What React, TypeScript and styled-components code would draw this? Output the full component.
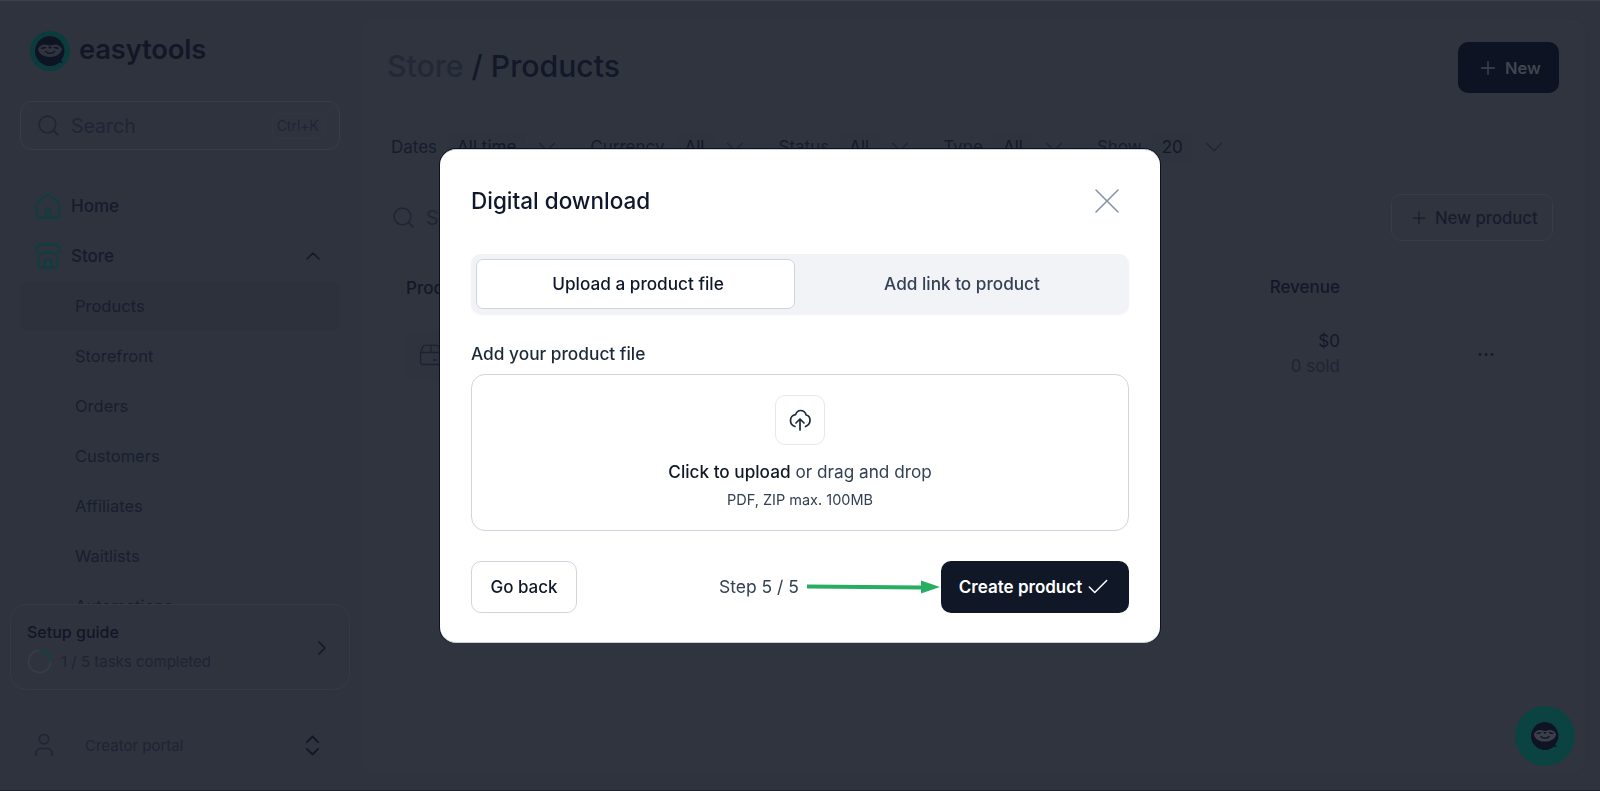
import React from 'react';
import styled, { createGlobalStyle } from 'styled-components';
import { Check, ChevronDown, ChevronRight, ChevronUp, ChevronsUpDown, Plus, Search, User, X } from 'lucide-react';

const GlobalStyle = createGlobalStyle`
  html, body { margin: 0; padding: 0; height: 100%; background: #2f333e; }
  * { box-sizing: border-box; }
  body { font-family: Inter, "Liberation Sans", sans-serif; overflow: hidden; }
`;

const Shell = styled.div`
  display: flex;
  height: 791px;
  overflow: hidden;
  background: #2f333e;
  border-top: 1px solid #423d52;
  border-bottom: 1px solid #1d2029;
  color: #171c2d;
`;

const Sidebar = styled.aside`
  width: 361px;
  flex-shrink: 0;
  display: flex;
  flex-direction: column;
`;

const LogoRow = styled.div`
  display: flex;
  align-items: center;
  gap: 9px;
  height: 40px;
  margin: 30px 0 30px 30px;
`;

const Wordmark = styled.span`
  font-size: 27.4px;
  font-weight: 600;
  color: #121727;
  letter-spacing: -0.2px;
  position: relative;
  top: -2px;
`;

const SearchBox = styled.div`
  display: flex;
  align-items: center;
  height: 49px;
  margin: 0 21px 0 20px;
  padding: 0 15px 0 15px;
  border: 1px solid #393d48;
  border-radius: 12px;
  color: #1f2534;
  font-size: 19.5px;
  gap: 10px;
`;

const SearchLabel = styled.span`
  flex: 1;
`;

const Kbd = styled.span`
  border: 1px solid #323641;
  border-radius: 5px;
  padding: 4px 4px;
  font-size: 14px;
  line-height: 16px;
  color: #1f2534;
`;

const Nav = styled.nav`
  flex: 1;
  min-height: 0;
  overflow: hidden;
  padding: 31px 21px 0 20px;
`;

const NavRow = styled.div`
  display: flex;
  align-items: center;
  height: 50px;
  padding: 0 15px;
  gap: 10px;
  font-size: 17px;
  font-weight: 500;
  color: #161b2c;
`;

const RowChevron = styled.span`
  margin-left: auto;
  display: flex;
  color: #131827;
`;

const SubRow = styled.div<{ $active?: boolean }>`
  display: flex;
  align-items: center;
  height: 50px;
  padding-left: 55px;
  padding-bottom: 1px;
  font-size: 16.5px;
  color: #181e2f;
  border-radius: 10px;
  background: ${p => (p.$active ? '#2d313b' : 'transparent')};
`;

const SetupCard = styled.div`
  display: flex;
  align-items: center;
  justify-content: space-between;
  height: 86px;
  margin: 0 11px 0 10px;
  padding: 2px 15px 0 16px;
  background: #2f333e;
  border: 1px solid #363a46;
  border-radius: 16px;
`;

const SetupTitle = styled.div`
  font-size: 16px;
  font-weight: 500;
  color: #111627;
  margin-bottom: 7px;
`;

const SetupProgress = styled.div`
  display: flex;
  align-items: center;
  gap: 9px;
  font-size: 15px;
  color: #1e2433;
`;

const SidebarFooter = styled.div`
  display: flex;
  align-items: center;
  height: 100px;
  padding: 10px 35px 0 30px;
  font-size: 15px;
  color: #1e2433;
`;

const FooterLabel = styled.span`
  margin-left: 27px;
  flex: 1;
`;

const Main = styled.main`
  flex: 1;
  margin: 17px 13px 15px 0;
  border: 1px solid #2e323c;
  border-radius: 16px;
  background: #30343f;
  display: flex;
  flex-direction: column;
`;

const TitleRow = styled.div`
  display: flex;
  align-items: center;
  justify-content: space-between;
  padding: 23px 27px 0 25px;
`;

const PageTitle = styled.h1`
  margin: -4px 0 0;
  font-size: 30.2px;
  font-weight: 500;
  color: #131828;
`;

const Crumb = styled.span`
  color: #232836;
`;

const NewButton = styled.div`
  display: flex;
  align-items: center;
  gap: 6px;
  height: 51px;
  width: 101px;
  padding-left: 19px;
  border-radius: 10px;
  background: #0d1322;
  color: #41454f;
  font-size: 16.5px;
  font-weight: 600;
`;

const FilterBar = styled.div`
  display: flex;
  align-items: center;
  height: 60px;
  margin-top: 24px;
  padding-left: 29px;
  border-bottom: 1px solid #2f333d;
  font-size: 17px;
  color: #171c2d;
`;

const FilterGroup = styled.div`
  display: flex;
  align-items: center;
  margin-right: 35px;
`;

const FilterValue = styled.span`
  margin: 0 13px 0 10px;
  padding: 5px 10px;
  border-radius: 8px;
  background: #2f333d;
  color: #131828;
`;

const FilterChevron = styled.span`
  display: flex;
  margin: 0 -7px;
  color: #1e2433;
`;

const TableTools = styled.div`
  display: flex;
  align-items: center;
  justify-content: space-between;
  padding: 17px 33px 0 29px;
`;

const TableSearch = styled.div`
  display: flex;
  align-items: center;
  gap: 10px;
  font-size: 19.5px;
  color: #1f2534;
`;

const NewProductButton = styled.div`
  display: flex;
  align-items: center;
  gap: 6px;
  height: 47px;
  width: 162px;
  padding-left: 17px;
  border: 1px solid #383c47;
  border-radius: 10px;
  color: #171c2d;
  font-size: 16.7px;
  font-weight: 500;
`;

const TableGrid = styled.div`
  display: grid;
  grid-template-columns: 1fr 90px 212px;
  padding: 0 34px 0 44px;
  align-items: center;
  font-size: 17px;
`;

const TableHead = styled(TableGrid)`
  height: 70px;
  font-weight: 500;
  color: #131828;
  padding-top: 23px;
`;

const TableRow = styled(TableGrid)`
  margin-top: 19px;
`;

const RevenueCell = styled.div`
  text-align: right;
  line-height: 25px;
  white-space: nowrap;
  color: #131828;
`;

const RowRevenue = styled(RevenueCell)`
  margin-top: -3px;
`;

const MutedLine = styled.div`
  color: #1e2433;
`;

const Thumb = styled.div`
  width: 50px;
  height: 50px;
  border-radius: 10px;
  background: #2f333d;
  display: flex;
  align-items: center;
  justify-content: center;
`;

const RowActions = styled.div`
  padding-left: 137px;
  font-size: 18px;
  font-weight: 700;
  line-height: 14px;
  color: #161b2b;
`;

const ChatBubble = styled.div`
  position: fixed;
  left: 1515px;
  top: 706px;
  width: 60px;
  height: 60px;
`;

const Overlay = styled.div`
  position: fixed;
  inset: 0;
  display: flex;
  align-items: center;
  justify-content: center;
`;

const Modal = styled.div`
  width: 720px;
  height: 494px;
  padding: 31px 31px 0 31px;
  background: #fff;
  border-top: 1px solid #c9d0da;
  border-bottom: 1px solid #c9d0da;
  border-radius: 16px;
  box-shadow: 1px 0 0 #0c1120, -1px 0 0 #0c1120, 0 -1px 0 #0c1120;
`;

const ModalHead = styled.div`
  display: flex;
  align-items: center;
  justify-content: space-between;
  height: 40px;
  color: #0f172a;
`;

const ModalTitle = styled.h2`
  margin: 0;
  font-size: 22.5px;
  font-weight: 500;
  color: #0f172a;
`;

const CloseIcon = styled.span`
  display: flex;
  color: #8493a8;
`;

const Tabs = styled.div`
  display: flex;
  height: 60px;
  margin-top: 33px;
  padding: 5px;
  border-radius: 10px;
  background: #f2f3f7;
  box-shadow: 0 1px 2px rgba(16, 24, 40, 0.05);
`;

const Tab = styled.div<{ $active?: boolean }>`
  flex: ${p => (p.$active ? '0 0 319px' : '1')};
  display: flex;
  align-items: center;
  justify-content: center;
  padding-left: 5px;
  border-radius: 7px;
  font-size: 17.2px;
  font-weight: 500;
  color: ${p => (p.$active ? '#0f172a' : '#344054')};
  background: ${p => (p.$active ? '#fff' : 'transparent')};
  border: ${p => (p.$active ? '1px solid #d0d5dd' : 'none')};
`;

const FieldLabel = styled.div`
  margin-top: 28px;
  height: 32px;
  font-size: 17.3px;
  font-weight: 500;
  line-height: 24px;
  color: #1d2939;
`;

const DropZone = styled.div`
  height: 157px;
  padding-top: 20px;
  border: 1px solid #d0d5dd;
  border-radius: 14px;
  display: flex;
  flex-direction: column;
  align-items: center;
`;

const UploadBox = styled.div`
  width: 50px;
  height: 50px;
  border: 1px solid #e6e8ee;
  border-radius: 10px;
  display: flex;
  align-items: center;
  justify-content: center;
`;

const DropText = styled.div`
  margin-top: 16px;
  font-size: 17.2px;
  line-height: 22px;
  color: #344054;
`;

const DropStrong = styled.span`
  font-weight: 500;
  color: #101828;
`;

const DropHint = styled.div`
  margin-top: 7px;
  font-size: 14.5px;
  line-height: 20px;
  color: #344054;
`;

const ModalFooter = styled.div`
  display: flex;
  align-items: center;
  justify-content: space-between;
  margin-top: 30px;
`;

const SecondaryButton = styled.div`
  width: 106px;
  height: 52px;
  display: flex;
  align-items: center;
  justify-content: center;
  border: 1px solid #d0d5dd;
  border-radius: 10px;
  font-size: 17px;
  font-weight: 500;
  color: #101828;
`;

const FooterRight = styled.div`
  display: flex;
  align-items: center;
`;

const StepText = styled.span`
  font-size: 17.5px;
  color: #344054;
  margin-right: 8px;
`;

const PrimaryButton = styled.div`
  width: 188px;
  height: 52px;
  margin-left: 1px;
  display: flex;
  align-items: center;
  justify-content: center;
  gap: 3px;
  border-radius: 10px;
  background: #101828;
  color: #fff;
  font-size: 17px;
  font-weight: 600;
`;

const SlothMark: React.FC<{ size: number; face: string; ring: string; scale?: number }> = ({ size, face, ring, scale = 1 }) => (
  <svg width={size} height={size} viewBox="0 0 40 40">
    <circle cx="20" cy="20" r="20" fill={ring} />
    <g transform={`translate(20 20) scale(${scale}) translate(-20 -20)`}>
      <path d="M20 5a15 15 0 1 0 9.500 26.600l3.300.2-1.800-2.400A15 15 0 0 0 20 5z" fill="#0e1423" />
      <path d="M8 18c1.500-3 4-4.500 7-4.500 2 0 3 1 5 1s3-1 5-1c3 0 5.500 1.500 7 4.500-1 5-6 8-12 8S9 23 8 18z" fill={face} />
      <path d="M10.500 17.500c1.500-1.500 3.500-2 6-1.300-1.300 1.400-3.800 2-6 1.300zM29.500 17.500c-1.500-1.500-3.500-2-6-1.300 1.300 1.400 3.800 2 6 1.300z" fill="#0e1423" />
      <path d="M18 15.800h4l-2 2z" fill="#0e1423" />
      <path d="M15.500 20.500c2.500 2.500 6.500 2.500 9 0" fill="none" stroke="#0e1423" strokeWidth="1.300" strokeLinecap="round" />
    </g>
  </svg>
);

const HomeIcon = () => (
  <svg width="26" height="26" viewBox="0 0 26 26" fill="none" stroke="#0b3f40" strokeWidth="1.800" strokeLinejoin="round">
    <path d="M1.500 12.500c0-1.300.500-2.300 1.500-3.200l8-6.800c1.200-1 2.800-1 4 0l8 6.800c1 .9 1.500 1.900 1.500 3.200V21c0 2.200-1.500 3.500-3.500 3.500H5c-2 0-3.500-1.300-3.500-3.500z" />
    <path d="M10.500 24.500V18c0-1.300 1-2.300 2.500-2.300s2.500 1 2.500 2.300v6.500" />
  </svg>
);

const StoreIcon = () => (
  <svg width="26" height="26" viewBox="0 0 26 26" fill="none" stroke="#0b3f40" strokeWidth="1.800" strokeLinejoin="round" strokeLinecap="round">
    <path d="M6 1.500h14c2.800 0 4.800 2 4.800 4.500 0 3-2.300 5-4.800 5-1.800 0-3-1-4-2.500-.7.700-1.700 1.100-3 1.100s-2.300-.4-3-1.100C9 10 7.800 11 6 11c-2.500 0-4.800-2-4.800-5 0-2.500 2-4.500 4.800-4.500z" />
    <path d="M3.500 14.500V21c0 2.300 1.200 3.500 3.500 3.500h12c2.300 0 3.500-1.200 3.500-3.500v-6.500" />
    <path d="M10 24.500V17h6v7.500" />
  </svg>
);

const PackageIcon = () => (
  <svg width="24" height="24" viewBox="0 0 24 24" fill="none" stroke="#1c2233" strokeWidth="1.300" strokeLinejoin="round">
    <path d="M1.500 9.500 4 3.500c.4-.8 1-1.200 2-1.200h12c1 0 1.600.4 2 1.200l2.500 6" />
    <path d="M1.500 9.500h21V19c0 1.500-1 2.500-2.500 2.500H4c-1.500 0-2.500-1-2.500-2.500z" />
    <path d="M12 2.500v7M14 17h4" />
  </svg>
);

const ProgressRing = () => (
  <svg width="25" height="25" viewBox="0 0 26 26" fill="none" strokeWidth="1.700">
    <circle cx="13" cy="13" r="11.500" stroke="#383c47" />
    <path d="M13 1.500A11.500 11.500 0 0 1 24.500 13" stroke="#0c4442" />
  </svg>
);

const UploadCloud = () => (
  <svg width="24" height="24" viewBox="0 0 24 24" fill="none" stroke="#1d2939" strokeWidth="1.700" strokeLinecap="round" strokeLinejoin="round">
    <path d="M7 18.500c-3-1-4.500-3.500-4.500-6 0-3 2-5.500 5-5.800C8.500 4 10 2.500 12.500 2.500c3 0 5 2 5.700 4.500 2.500.5 3.800 2.800 3.800 5.300 0 3-1.500 5-4.500 6.200" />
    <path d="M12 22V11M8 15l4-4 4 4" />
  </svg>
);

const StepArrow = () => (
  <svg width="133" height="20" viewBox="0 0 133 20">
    <path d="M0 7.500 114 8.500v-5L133 10l-19 6.500v-4L0 11.500z" fill="#27ae60" />
  </svg>
);

const filters = [
  { label: 'Dates', value: 'All time' },
  { label: 'Currency', value: 'All' },
  { label: 'Status', value: 'All' },
  { label: 'Type', value: 'All' },
  { label: 'Show', value: '20' },
];

const subItems = ['Products', 'Storefront', 'Orders', 'Customers', 'Affiliates', 'Waitlists', 'Automations'];

const App: React.FC = () => (
  <>
    <GlobalStyle />
    <Shell>
      <Sidebar>
        <LogoRow>
          <SlothMark size={40} face="#2f333e" ring="#0c3b3d" />
          <Wordmark>easytools</Wordmark>
        </LogoRow>
        <SearchBox>
          <Search size={25} strokeWidth={1.5} color="#1f2534" />
          <SearchLabel>Search</SearchLabel>
          <Kbd>Ctrl+K</Kbd>
        </SearchBox>
        <Nav>
          <NavRow><HomeIcon />Home</NavRow>
          <NavRow>
            <StoreIcon />Store
            <RowChevron><ChevronUp size={24} strokeWidth={1.5} /></RowChevron>
          </NavRow>
          {subItems.map((item, i) => (
            <SubRow key={item} $active={i === 0}>{item}</SubRow>
          ))}
        </Nav>
        <SetupCard>
          <div>
            <SetupTitle>Setup guide</SetupTitle>
            <SetupProgress><ProgressRing />1 / 5 tasks completed</SetupProgress>
          </div>
          <RowChevron><ChevronRight size={24} strokeWidth={1.7} /></RowChevron>
        </SetupCard>
        <SidebarFooter>
          <User size={28} strokeWidth={1.4} color="#1f2534" />
          <FooterLabel>Creator portal</FooterLabel>
          <ChevronsUpDown size={27} strokeWidth={1.7} color="#131827" />
        </SidebarFooter>
      </Sidebar>
      <Main>
        <TitleRow>
          <PageTitle><Crumb>Store</Crumb> / Products</PageTitle>
          <NewButton><Plus size={22} strokeWidth={1.5} />New</NewButton>
        </TitleRow>
        <FilterBar>
          {filters.map(f => (
            <FilterGroup key={f.label}>
              {f.label}
              <FilterValue>{f.value}</FilterValue>
              <FilterChevron><ChevronDown size={30} strokeWidth={0.9} /></FilterChevron>
            </FilterGroup>
          ))}
        </FilterBar>
        <TableTools>
          <TableSearch>
            <Search size={25} strokeWidth={1.5} color="#1f2534" />Search
          </TableSearch>
          <NewProductButton><Plus size={20} strokeWidth={1.5} />New product</NewProductButton>
        </TableTools>
        <TableHead>
          <span>Product</span>
          <RevenueCell>Revenue</RevenueCell>
        </TableHead>
        <TableRow>
          <Thumb><PackageIcon /></Thumb>
          <RowRevenue>
            $0
            <MutedLine>0 sold</MutedLine>
          </RowRevenue>
          <RowActions>···</RowActions>
        </TableRow>
      </Main>
    </Shell>
    <ChatBubble><SlothMark size={60} face="#3a3f4b" ring="#0b4343" scale={0.62} /></ChatBubble>
    <Overlay>
      <Modal>
        <ModalHead>
          <ModalTitle>Digital download</ModalTitle>
          <CloseIcon><X size={44} strokeWidth={0.85} /></CloseIcon>
        </ModalHead>
        <Tabs>
          <Tab $active>Upload a product file</Tab>
          <Tab>Add link to product</Tab>
        </Tabs>
        <FieldLabel>Add your product file</FieldLabel>
        <DropZone>
          <UploadBox><UploadCloud /></UploadBox>
          <DropText><DropStrong>Click to upload</DropStrong> or drag and drop</DropText>
          <DropHint>PDF, ZIP max. 100MB</DropHint>
        </DropZone>
        <ModalFooter>
          <SecondaryButton>Go back</SecondaryButton>
          <FooterRight>
            <StepText>Step 5 / 5</StepText>
            <StepArrow />
            <PrimaryButton>Create product<Check size={26} strokeWidth={1.4} /></PrimaryButton>
          </FooterRight>
        </ModalFooter>
      </Modal>
    </Overlay>
  </>
);

export default App;
